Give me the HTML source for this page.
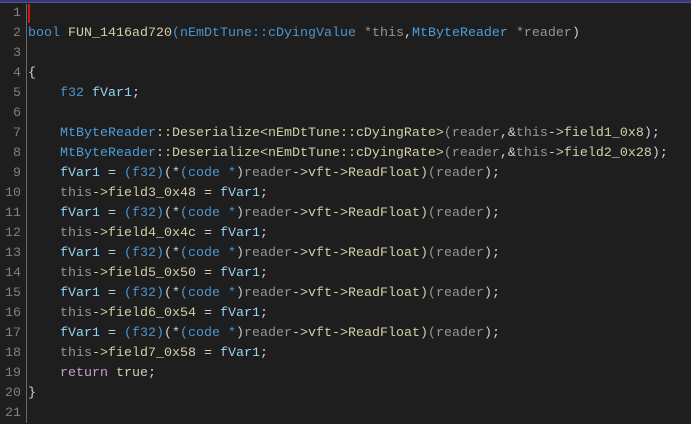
<!DOCTYPE html>
<html><head><meta charset="utf-8"><style>
html,body{margin:0;padding:0;background:#1e1e1e;width:691px;height:423px;overflow:hidden}
.top{position:absolute;left:0;top:0;width:691px;height:2px;background:#33338a}
.top2{position:absolute;left:0;top:2px;width:691px;height:1px;background:#5a5a5a}
.gut{position:absolute;left:26px;top:4px;width:1px;height:419px;background:#6a6a6a}
.cur{position:absolute;left:28px;top:4px;width:2px;height:19px;background:#e01010}
.code{position:absolute;left:0;top:4px;font-family:"Liberation Mono",monospace;font-size:13.33px;line-height:20px;color:#d0d0d0;white-space:pre}
.ln{display:inline-block;width:21px;text-align:right;color:#808080;margin-right:7px}
.k{color:#4f94cc}.t{color:#4a9edc}.f{color:#d2cfa6}.v{color:#96d2f2}.g{color:#959595}.r{color:#cc9ad2}.y{color:#d2cfa6}
</style></head><body>
<div class="top"></div><div class="top2"></div><div class="gut"></div><div class="cur"></div>
<div class="code"><span class="ln">1</span>
<span class="ln">2</span><span class="k">bool</span> <span class="f">FUN_1416ad720</span><span class="k">(nEmDtTune::cDyingValue</span> <span class="g">*this</span>,<span class="t">MtByteReader</span> <span class="g">*reader</span>)
<span class="ln">3</span>
<span class="ln">4</span>{
<span class="ln">5</span>    <span class="k">f32</span> <span class="v">fVar1</span>;
<span class="ln">6</span>
<span class="ln">7</span>    <span class="t">MtByteReader</span><span class="y">::Deserialize&lt;nEmDtTune::cDyingRate&gt;</span><span class="g">(reader</span>,&amp;<span class="g">this</span><span class="y">-&gt;field1_0x8</span>);
<span class="ln">8</span>    <span class="t">MtByteReader</span><span class="y">::Deserialize&lt;nEmDtTune::cDyingRate&gt;</span><span class="g">(reader</span>,&amp;<span class="g">this</span><span class="y">-&gt;field2_0x28</span>);
<span class="ln">9</span>    <span class="v">fVar1</span> = <span class="k">(f32)</span>(*<span class="k">(code *</span>)<span class="g">reader</span><span class="y">-&gt;vft-&gt;ReadFloat)</span><span class="g">(reader</span>);
<span class="ln">10</span>    <span class="g">this</span><span class="y">-&gt;field3_0x48</span> = <span class="v">fVar1</span>;
<span class="ln">11</span>    <span class="v">fVar1</span> = <span class="k">(f32)</span>(*<span class="k">(code *</span>)<span class="g">reader</span><span class="y">-&gt;vft-&gt;ReadFloat)</span><span class="g">(reader</span>);
<span class="ln">12</span>    <span class="g">this</span><span class="y">-&gt;field4_0x4c</span> = <span class="v">fVar1</span>;
<span class="ln">13</span>    <span class="v">fVar1</span> = <span class="k">(f32)</span>(*<span class="k">(code *</span>)<span class="g">reader</span><span class="y">-&gt;vft-&gt;ReadFloat)</span><span class="g">(reader</span>);
<span class="ln">14</span>    <span class="g">this</span><span class="y">-&gt;field5_0x50</span> = <span class="v">fVar1</span>;
<span class="ln">15</span>    <span class="v">fVar1</span> = <span class="k">(f32)</span>(*<span class="k">(code *</span>)<span class="g">reader</span><span class="y">-&gt;vft-&gt;ReadFloat)</span><span class="g">(reader</span>);
<span class="ln">16</span>    <span class="g">this</span><span class="y">-&gt;field6_0x54</span> = <span class="v">fVar1</span>;
<span class="ln">17</span>    <span class="v">fVar1</span> = <span class="k">(f32)</span>(*<span class="k">(code *</span>)<span class="g">reader</span><span class="y">-&gt;vft-&gt;ReadFloat)</span><span class="g">(reader</span>);
<span class="ln">18</span>    <span class="g">this</span><span class="y">-&gt;field7_0x58</span> = <span class="v">fVar1</span>;
<span class="ln">19</span>    <span class="r">return</span> <span class="y">true</span>;
<span class="ln">20</span>}
<span class="ln">21</span>
</div>
</body></html>
